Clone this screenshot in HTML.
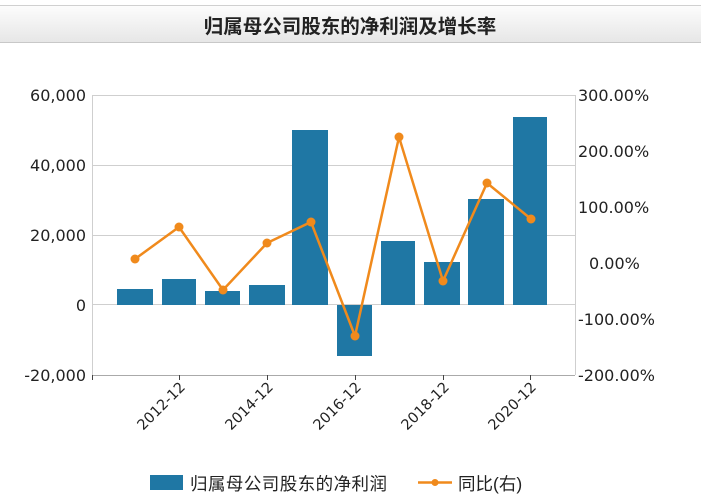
<!DOCTYPE html>
<html><head><meta charset="utf-8"><style>
html,body{margin:0;padding:0;background:#fff;}
svg{display:block;font-family:"DejaVu Sans","Noto Sans CJK SC",sans-serif;}
.cjk{font-family:"Liberation Sans","Noto Sans CJK SC",sans-serif;}
</style></head><body>
<svg width="701" height="498" viewBox="0 0 701 498" xmlns="http://www.w3.org/2000/svg">
<defs><linearGradient id="g" x1="0" y1="0" x2="0" y2="1"><stop offset="0" stop-color="#fdfdfd"/><stop offset="1" stop-color="#e6e6e6"/></linearGradient></defs>
<rect x="0" y="0" width="701" height="498" fill="#fff"/>
<rect x="0" y="5" width="701" height="38" fill="url(#g)"/>
<line x1="0" y1="5.5" x2="701" y2="5.5" stroke="#d0d0d0"/>
<line x1="0" y1="42.5" x2="701" y2="42.5" stroke="#c8c8c8"/>
<text class="cjk" x="350" y="33" text-anchor="middle" font-size="19.5" font-weight="bold" fill="#222">归属母公司股东的净利润及增长率</text>
<g stroke="#cfcfcf" stroke-width="1">
<line x1="92" y1="95.5" x2="575" y2="95.5"/>
<line x1="92" y1="165.5" x2="575" y2="165.5"/>
<line x1="92" y1="235.5" x2="575" y2="235.5"/>
<line x1="92" y1="304.5" x2="575" y2="304.5"/>
<line x1="92.5" y1="95" x2="92.5" y2="375"/>
<line x1="575.5" y1="95" x2="575.5" y2="375"/>
</g>
<line x1="92" y1="375.5" x2="575" y2="375.5" stroke="#aaa"/>
<g stroke="#444"><line x1="92.5" y1="375" x2="92.5" y2="380"/><line x1="179.5" y1="375" x2="179.5" y2="380"/><line x1="267.5" y1="375" x2="267.5" y2="380"/><line x1="355.5" y1="375" x2="355.5" y2="380"/><line x1="443.5" y1="375" x2="443.5" y2="380"/><line x1="530.5" y1="375" x2="530.5" y2="380"/></g>
<g fill="#1f77a4">
<rect x="117" y="289" width="36" height="16"/>
<rect x="162" y="279" width="34" height="26"/>
<rect x="205" y="291" width="35" height="14"/>
<rect x="249" y="285" width="36" height="20"/>
<rect x="292" y="130" width="36" height="175"/>
<rect x="337" y="305" width="35" height="51"/>
<rect x="381" y="241" width="34" height="64"/>
<rect x="424" y="262" width="36" height="43"/>
<rect x="468" y="199" width="36" height="106"/>
<rect x="513" y="117" width="34" height="188"/>
</g>
<polyline fill="none" stroke="#f08a1c" stroke-width="2.5" points="135,259 179,227 223,290 267,243 311,222 355,336 399,137 443,281 487,183 531,219"/>
<g fill="#f08a1c">
<circle cx="135" cy="259" r="4.5"/><circle cx="179" cy="227" r="4.5"/><circle cx="223" cy="290" r="4.5"/><circle cx="267" cy="243" r="4.5"/><circle cx="311" cy="222" r="4.5"/><circle cx="355" cy="336" r="4.5"/><circle cx="399" cy="137" r="4.5"/><circle cx="443" cy="281" r="4.5"/><circle cx="487" cy="183" r="4.5"/><circle cx="531" cy="219" r="4.5"/>
</g>
<g font-size="16" fill="#222" text-anchor="end">
<text x="86" y="101">60,000</text>
<text x="86" y="171">40,000</text>
<text x="86" y="241">20,000</text>
<text x="86" y="311">0</text>
<text x="86" y="381">-20,000</text>
</g>
<g font-size="16" fill="#222">
<text x="578" y="101">300.00%</text>
<text x="578" y="157">200.00%</text>
<text x="578" y="213">100.00%</text>
<text x="589" y="269">0.00%</text>
<text x="578" y="325">-100.00%</text>
<text x="578" y="381">-200.00%</text>
</g>
<g font-size="14.5" fill="#222" text-anchor="end">
<text transform="translate(186,388) rotate(-45)">2012-12</text>
<text transform="translate(274,388) rotate(-45)">2014-12</text>
<text transform="translate(362,388) rotate(-45)">2016-12</text>
<text transform="translate(450,388) rotate(-45)">2018-12</text>
<text transform="translate(537,388) rotate(-45)">2020-12</text>
</g>
<rect x="150" y="475" width="33" height="15" fill="#1f77a4"/>
<text class="cjk" x="190" y="490" font-size="17.5" fill="#222" textLength="197">归属母公司股东的净利润</text>
<line x1="418" y1="482.5" x2="452" y2="482.5" stroke="#f08a1c" stroke-width="2.5"/>
<circle cx="435" cy="482.5" r="3.5" fill="#f08a1c"/>
<text class="cjk" x="458" y="490" font-size="17.5" fill="#222">同比(右)</text>
</svg>
</body></html>
